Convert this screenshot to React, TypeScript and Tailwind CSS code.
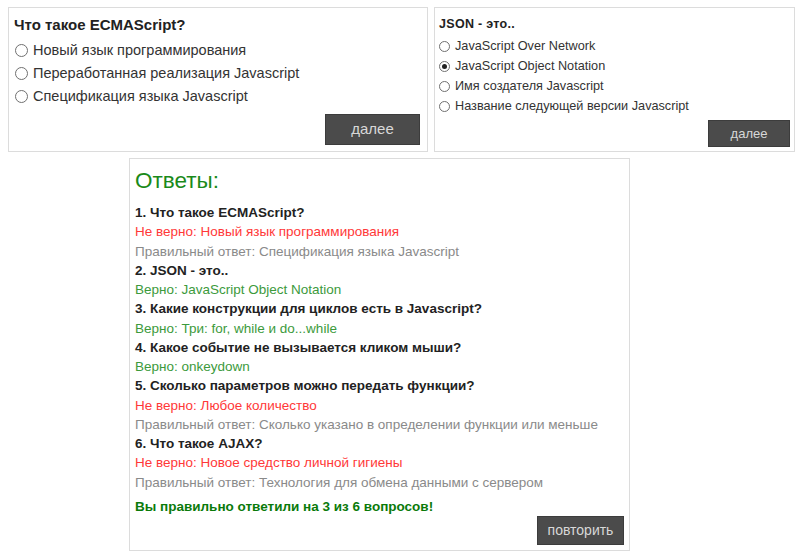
import React from 'react';

type Option = { label: string; checked?: boolean };

const quiz1: Option[] = [
  { label: 'Новый язык программирования' },
  { label: 'Переработанная реализация Javascript' },
  { label: 'Спецификация языка Javascript' },
];

const quiz2: Option[] = [
  { label: 'JavaScript Over Network' },
  { label: 'JavaScript Object Notation', checked: true },
  { label: 'Имя создателя Javascript' },
  { label: 'Название следующей версии Javascript' },
];

type Result = { question: string; ok: boolean; given: string; correct?: string };

const results: Result[] = [
  { question: '1. Что такое ECMAScript?', ok: false, given: 'Новый язык программирования', correct: 'Спецификация языка Javascript' },
  { question: '2. JSON - это..', ok: true, given: 'JavaScript Object Notation' },
  { question: '3. Какие конструкции для циклов есть в Javascript?', ok: true, given: 'Три: for, while и do...while' },
  { question: '4. Какое событие не вызывается кликом мыши?', ok: true, given: 'onkeydown' },
  { question: '5. Сколько параметров можно передать функции?', ok: false, given: 'Любое количество', correct: 'Сколько указано в определении функции или меньше' },
  { question: '6. Что такое AJAX?', ok: false, given: 'Новое средство личной гигиены', correct: 'Технология для обмена данными с сервером' },
];

function Radio({ checked, size }: { checked?: boolean; size: 'lg' | 'sm' }) {
  return (
    <span
      className={
        size === 'lg'
          ? 'flex items-center justify-center w-[13px] h-[13px] rounded-full border border-[#707070] bg-white shrink-0'
          : 'flex items-center justify-center w-[11px] h-[11px] rounded-full border border-[#707070] bg-white shrink-0'
      }
    >
      {checked && <span className="block w-[5px] h-[5px] rounded-full bg-[#222]" />}
    </span>
  );
}

function Button({ children, small }: { children: React.ReactNode; small?: boolean }) {
  return (
    <button
      className={
        small
          ? 'w-[82px] h-[27px] bg-[#4b4b4b] border border-[#3c3c3c] text-[#d8d8d8] text-[13px]'
          : 'w-[95px] h-[31px] bg-[#4b4b4b] border border-[#3c3c3c] text-[#d8d8d8] text-[15px]'
      }
    >
      {children}
    </button>
  );
}

export default function App() {
  return (
    <div className="w-[800px] h-[557px] bg-white text-[#222] font-['Liberation_Sans',Arial,sans-serif]">
      {/* Quiz cards */}
      <div className="flex gap-[6px] pt-[7px] pl-[8px]">
        <div className="w-[420px] h-[145px] border border-[#dcdcdc] px-[5px] pt-[6px] pb-[6px] flex flex-col">
          <div className="font-bold text-[15px] leading-[22px]">Что такое ECMAScript?</div>
          <div className="mt-[3px]">
            {quiz1.map((o) => (
              <label key={o.label} className="flex items-center gap-[5px] pl-[1px] text-[14.5px] leading-[23px] text-[#333]">
                <Radio size="lg" checked={o.checked} />
                {o.label}
              </label>
            ))}
          </div>
          <div className="mt-auto flex justify-end pr-[2px]">
            <Button>далее</Button>
          </div>
        </div>

        <div className="w-[361px] h-[145px] border border-[#dcdcdc] px-[4px] pt-[7px] pb-[4px] flex flex-col">
          <div className="font-bold text-[12.5px] leading-[18px] tracking-[0.3px]">JSON - это..</div>
          <div className="mt-[3px]">
            {quiz2.map((o) => (
              <label key={o.label} className="flex items-center gap-[5px] text-[12.7px] leading-[20px] text-[#333]">
                <Radio size="sm" checked={o.checked} />
                {o.label}
              </label>
            ))}
          </div>
          <div className="mt-auto flex justify-end">
            <Button small>далее</Button>
          </div>
        </div>
      </div>

      {/* Answers */}
      <div className="ml-[129px] mt-[6px] w-[501px] border border-[#dcdcdc] px-[5px] pt-[8px] pb-[5px]">
        <h2 className="text-[22.5px] leading-[28px] text-[#1a8a1a]">Ответы:</h2>
        <div className="mt-[8px] text-[13.5px] leading-[19.25px]">
          {results.map((r) => (
            <div key={r.question}>
              <div className="font-bold text-[#222]">{r.question}</div>
              {r.ok ? (
                <div className="text-[#3c9a3c]">Верно: {r.given}</div>
              ) : (
                <div className="text-[#ff3838]">Не верно: {r.given}</div>
              )}
              {r.correct && <div className="text-[#8a8a8a]">Правильный ответ: {r.correct}</div>}
            </div>
          ))}
        </div>
        <div className="mt-[5px] font-bold text-[13.5px] leading-[19.25px] text-[#0a7a0a]">
          Вы правильно ответили на 3 из 6 вопросов!
        </div>
        <div className="flex justify-end">
          <button className="w-[87px] h-[29px] bg-[#4b4b4b] border border-[#3c3c3c] text-[#d8d8d8] text-[14px]">
            повторить
          </button>
        </div>
      </div>
    </div>
  );
}
